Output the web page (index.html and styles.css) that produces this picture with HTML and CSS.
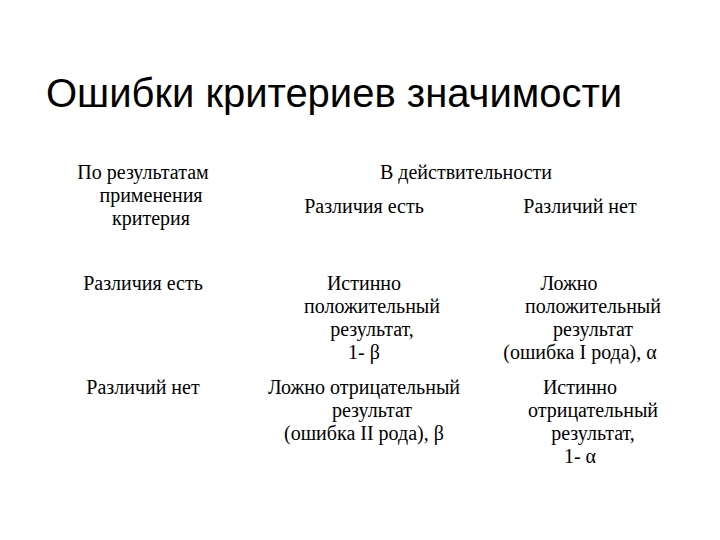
FILE: index.html
```html
<!DOCTYPE html>
<html lang="ru">
<head>
<meta charset="utf-8">
<title>Ошибки критериев значимости</title>
<link rel="stylesheet" href="styles.css">
</head>
<body>
<div class="slide">
  <h1 class="title">Ошибки критериев значимости</h1>
  <div class="table">
    <div class="cell h-crit">
      <span class="ln">По результатам</span>
      <span class="ln sr">применения</span>
      <span class="ln sr">критерия</span>
    </div>
    <div class="cell h-real">В действительности</div>
    <div class="cell h-sub">Различия есть</div>
    <div class="cell h-sub">Различий нет</div>

    <div class="cell row1">Различия есть</div>
    <div class="cell row1">
      <span class="ln">Истинно</span>
      <span class="ln sr">положительный</span>
      <span class="ln sr">результат,</span>
      <span class="ln">1- β</span>
    </div>
    <div class="cell row1">
      <span class="ln sl">Ложно</span>
      <span class="ln sr2">положительный</span>
      <span class="ln sr2">результат</span>
      <span class="ln">(ошибка I рода), α</span>
    </div>

    <div class="cell row2">Различий нет</div>
    <div class="cell row2">
      <span class="ln">Ложно отрицательный</span>
      <span class="ln sr">результат</span>
      <span class="ln">(ошибка II рода), β</span>
    </div>
    <div class="cell row2">
      <span class="ln">Истинно</span>
      <span class="ln sr2">отрицательный</span>
      <span class="ln sr2">результат,</span>
      <span class="ln">1- α</span>
    </div>
  </div>
</div>
</body>
</html>
```

FILE: styles.css
```css
html, body {
  margin: 0;
  padding: 0;
  background: #ffffff;
}

.slide {
  width: 720px;
  height: 540px;
  background: #ffffff;
  color: #000000;
  overflow: hidden;
}

.title {
  margin: 0;
  padding: 71px 0 0 46px;
  font-family: "Liberation Sans", Arial, sans-serif;
  font-weight: normal;
  font-size: 40px;
  line-height: 44px;
  color: #000000;
}

.table {
  display: grid;
  grid-template-columns: 206px 236px 196px;
  margin: 46px 0 0 40px;
  font-family: "Liberation Serif", "DejaVu Serif", serif;
  font-size: 20px;
  line-height: 23px;
  color: #000000;
}

.cell {
  text-align: center;
  white-space: nowrap;
}

.ln {
  display: block;
}

.sr { padding-left: 16px; }
.sr2 { padding-left: 26px; }
.sl { padding-right: 22px; }

.h-crit {
  grid-column: 1;
  grid-row: 1 / span 2;
}

.h-real {
  grid-column: 2 / span 2;
  grid-row: 1;
  padding-left: 8px;
}

.h-sub {
  grid-row: 2;
  margin-top: -2px;
  align-self: start;
}

.row1 {
  padding-top: 42px;
}

.row2 {
  padding-top: 12px;
}
```
